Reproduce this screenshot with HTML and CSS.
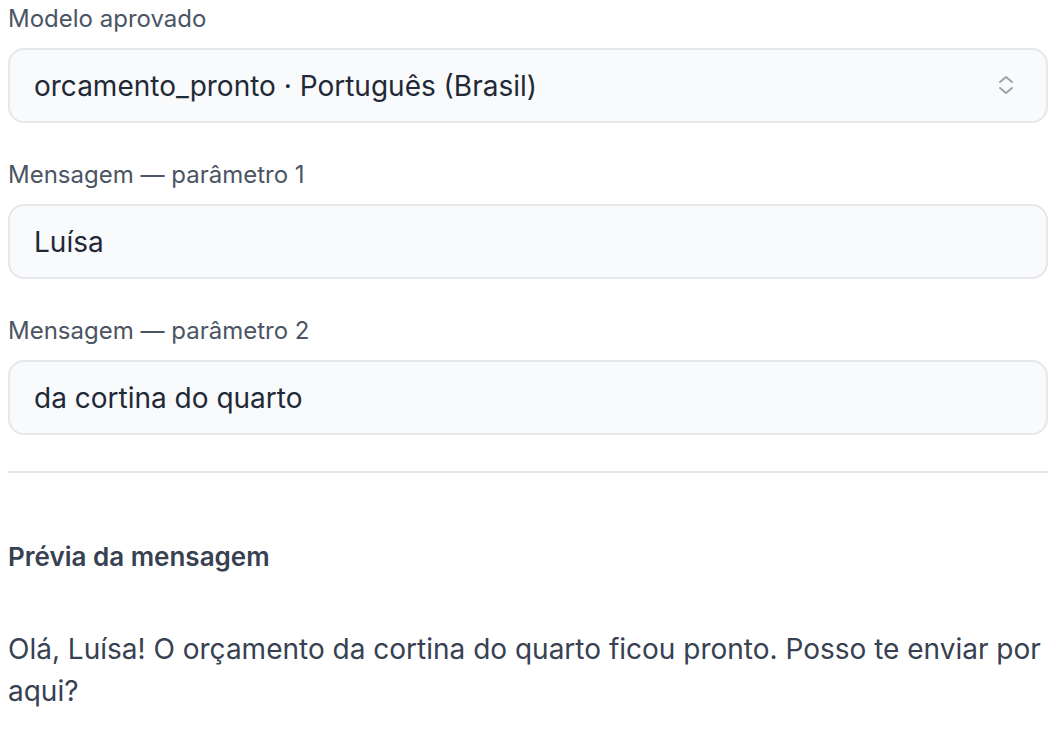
FILE: index.html
```html
<!DOCTYPE html>
<html>
	<head>
		<link rel="stylesheet" href="styles.css">
	</head>
	<body>

	<div class="form">
		<div class="field">
			<label class="label" for="modelo">Modelo aprovado</label>
			<div class="select_wrap">
				<select id="modelo" class="control">
					<option>orcamento_pronto · Português (Brasil)</option>
				</select>
				<svg class="chevron" width="18" height="22" viewBox="0 0 18 22" fill="none" stroke="#9ca3af" stroke-width="2" stroke-linecap="round" stroke-linejoin="round">
					<path d="M3 8 L9 3 L15 8"/>
					<path d="M3 14 L9 19 L15 14"/>
				</svg>
			</div>
		</div>

		<div class="field">
			<label class="label" for="param1">Mensagem — parâmetro 1</label>
			<input id="param1" class="control" value="Luísa">
		</div>

		<div class="field">
			<label class="label" for="param2">Mensagem — parâmetro 2</label>
			<input id="param2" class="control" value="da cortina do quarto">
		</div>
	</div>

	<hr class="divider">

	<div class="preview">
		<h3 class="preview_title">Prévia da mensagem</h3>
		<p class="preview_text">Olá, Luísa! O orçamento da cortina do quarto ficou pronto. Posso te enviar por aqui?</p>
	</div>

	</body>
</html>
```

FILE: styles.css
```css
body{
	margin: 0;
	padding: 3px 8px 0 8px;
	font-family: Inter, "Noto Sans", sans-serif;
	background: #fff;
	color: #374151;
}

.field{
	margin-bottom: 36px;
}

.label{
	display: block;
	font-size: 24px;
	line-height: 32px;
	color: #4b5563;
	margin-bottom: 13px;
}

.select_wrap{
	position: relative;
}

.control{
	display: block;
	box-sizing: border-box;
	width: 100%;
	height: 75px;
	margin: 0;
	padding: 0 24px;
	border: 2px solid #e5e7eb;
	border-radius: 16px;
	background: #f9fafb;
	font-family: Inter, "Noto Sans", sans-serif;
	font-size: 28px;
	color: #1f2937;
	outline: none;
	-webkit-appearance: none;
	appearance: none;
}

.chevron{
	position: absolute;
	right: 33px;
	top: 26px;
	pointer-events: none;
}

.divider{
	border: 0;
	border-top: 2px solid #e5e7eb;
	margin: 1px 0 0 0;
}

.preview{
	padding-top: 68px;
}

.preview_title{
	margin: 0;
	font-size: 26px;
	line-height: 32px;
	font-weight: 600;
	color: #374151;
}

.preview_text{
	margin: 55px 0 0 0;
	font-size: 28px;
	line-height: 42px;
	color: #374151;
}
```
